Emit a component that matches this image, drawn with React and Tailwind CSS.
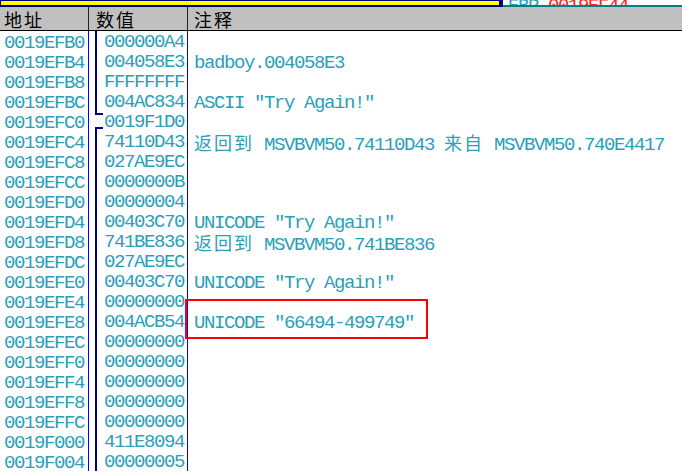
import React from "react";

const rows = [
  ["0019EFB0", "000000A4", "", "line"],
  ["0019EFB4", "004058E3", "badboy.004058E3", "line"],
  ["0019EFB8", "FFFFFFFF", "", "line"],
  ["0019EFBC", "004AC834", 'ASCII "Try Again!"', "line"],
  ["0019EFC0", "0019F1D0", "", "split"],
  ["0019EFC4", "74110D43", "返回到 MSVBVM50.74110D43 来自 MSVBVM50.740E4417", "line"],
  ["0019EFC8", "027AE9EC", "", "line"],
  ["0019EFCC", "0000000B", "", "line"],
  ["0019EFD0", "00000004", "", "line"],
  ["0019EFD4", "00403C70", 'UNICODE "Try Again!"', "line"],
  ["0019EFD8", "741BE836", "返回到 MSVBVM50.741BE836", "line"],
  ["0019EFDC", "027AE9EC", "", "line"],
  ["0019EFE0", "00403C70", 'UNICODE "Try Again!"', "line"],
  ["0019EFE4", "00000000", "", "line"],
  ["0019EFE8", "004ACB54", 'UNICODE "66494-499749"', "line"],
  ["0019EFEC", "00000000", "", "line"],
  ["0019EFF0", "00000000", "", "line"],
  ["0019EFF4", "00000000", "", "line"],
  ["0019EFF8", "00000000", "", "line"],
  ["0019EFFC", "00000000", "", "line"],
  ["0019F000", "411E8094", "", "line"],
  ["0019F004", "00000005", "", "line"],
];

const mono = "font-['Liberation_Mono',monospace] text-[19px] tracking-[-1.4px] leading-[20px]";
const cjk = "font-['Noto_Sans_CJK_SC',sans-serif] text-[18px] tracking-[2px] leading-[20px]";

function Mixed({ text }) {
  const parts = text.split(/([\u4e00-\u9fff]+)/).filter((p) => p.length);
  return (
    <span className="whitespace-pre">
      {parts.map((p, i) =>
        /[\u4e00-\u9fff]/.test(p) ? (
          <span key={i} className={cjk}>
            {p}
          </span>
        ) : (
          <span key={i} className={mono}>
            {p}
          </span>
        )
      )}
    </span>
  );
}

function Gutter({ kind }) {
  if (kind === "split") {
    return (
      <div className="w-[9px] shrink-0 h-full flex flex-col">
        <div className="w-[8px] h-[4px] border-l-2 border-b-2 border-[#000080]" />
        <div className="flex-1" />
        <div className="w-[8px] h-[4px] border-l-2 border-t-2 border-[#000080]" />
      </div>
    );
  }
  return (
    <div className="w-[9px] shrink-0 h-full">
      <div className="w-[2px] h-full bg-[#000080]" />
    </div>
  );
}

export default function App() {
  return (
    <div className="relative w-[682px] h-[472px] overflow-hidden bg-white text-[#2a9fb9] leading-[20px]">
      {/* top strip */}
      <div className="flex h-[7px]">
        <div className="w-[503px] h-[7px] bg-[#000080] pt-[1px] pl-[1px] pr-[4px]">
          <div className="h-[4px] bg-[#ffff00]" />
        </div>
        <div className="flex-1 overflow-hidden border-b-2 border-[#008080]">
          <div className={`${mono} whitespace-pre pl-[5px] mt-[-4px]`}>
            <span className="text-[#2a9fb9]">EBP </span>
            <span className="text-[#ff2020]">0019EF44</span>
          </div>
        </div>
      </div>

      {/* header */}
      <div className="flex h-[24px] bg-[#c0c0c0] border-b border-black text-black">
        <div className="w-[89px] border-r border-[#202020] pl-[4px] flex items-center">
          <span className={cjk}>地址</span>
        </div>
        <div className="w-[99px] border-r border-[#202020] pl-[7px] flex items-center">
          <span className={cjk}>数值</span>
        </div>
        <div className="flex-1 pl-[6px] flex items-center">
          <span className={cjk}>注释</span>
        </div>
      </div>

      {/* rows */}
      <div className="flex flex-col">
        {rows.map(([addr, val, cmt, kind]) => (
          <div key={addr} className="flex h-[20px]">
            <div className="w-[89px] shrink-0 border-r border-[#0000ff] pl-[4px] pt-[1px]">
              <span className={mono}>{addr}</span>
            </div>
            <div className="w-[99px] shrink-0 border-r border-[#0000ff] pl-[6px] flex">
              <Gutter kind={kind} />
              <span className={`${mono} pt-[1px]`}>{val}</span>
            </div>
            <div className="flex-1 pl-[6px] pt-[1px] whitespace-nowrap">
              {cmt && <Mixed text={cmt} />}
            </div>
          </div>
        ))}
      </div>

      {/* red highlight box */}
      <div className="absolute left-[185px] top-[299px] w-[243px] h-[40px] border-2 border-[#ff0000]" />
    </div>
  );
}
